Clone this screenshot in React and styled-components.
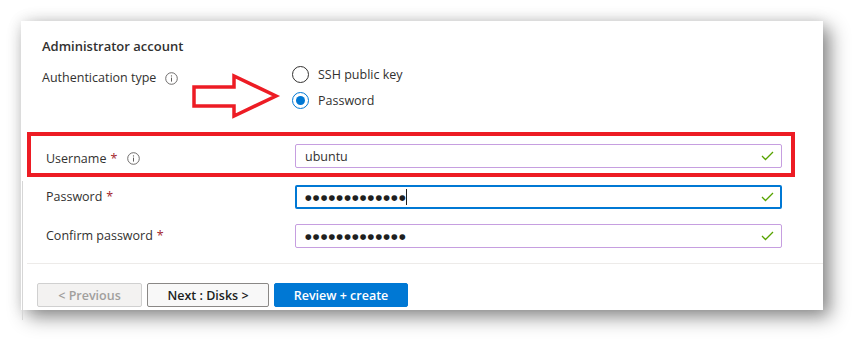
import React from "react";
import styled, { createGlobalStyle } from "styled-components";

const Global = createGlobalStyle`
  html, body { margin: 0; padding: 0; background: #ffffff; }
  body { font-family: "Open Sans", "Noto Sans", Arial, sans-serif; color: #323130; }
  * { box-sizing: border-box; }
`;

const Page = styled.div`
  width: 865px;
  height: 362px;
  padding: 21px 0 0 21px;
  overflow: hidden;
`;

const Card = styled.div`
  position: relative;
  width: 802px;
  height: 289px;
  background: #ffffff;
  box-shadow: 7px 7px 18px rgba(0, 0, 0, 0.45), 0 0 14px rgba(0, 0, 0, 0.1);
  display: flex;
  flex-direction: column;
`;

const Top = styled.div`
  position: relative;
  padding: 15px 0 0 21px;
`;

const Title = styled.div`
  font-size: 13px;
  font-weight: 600;
  line-height: 20px;
  color: #323130;
`;

const AuthRow = styled.div`
  display: grid;
  grid-template-columns: 250px 1fr;
  margin-top: 8px;
`;

const Label = styled.div`
  display: flex;
  align-items: center;
  font-size: 12.5px;
  line-height: 20px;
  color: #323130;
  padding-top: ${(p) => p.$pt || 0}px;
  align-self: ${(p) => p.$align || "center"};
`;

const Req = styled.span`
  color: #a4262c;
  margin-left: 4px;
`;

const InfoSvg = styled.svg`
  margin-left: ${(p) => p.$ml}px;
  flex: none;
`;

const RadioGroup = styled.div`
  display: flex;
  flex-direction: column;
  gap: 6px;
`;

const RadioRow = styled.div`
  display: flex;
  align-items: center;
  gap: 9px;
  height: 20px;
  font-size: 12.5px;
  color: #323130;
`;

const RadioCircle = styled.span`
  width: 17px;
  height: 17px;
  border-radius: 50%;
  border: 1px solid ${(p) => (p.$checked ? "#0078d4" : "#323130")};
  display: inline-flex;
  align-items: center;
  justify-content: center;
  &::after {
    content: "";
    width: 9px;
    height: 9px;
    border-radius: 50%;
    background: ${(p) => (p.$checked ? "#0078d4" : "transparent")};
  }
`;

const ArrowSvg = styled.svg`
  position: absolute;
  left: 169px;
  top: 52px;
`;

const Highlight = styled.div`
  margin: 22px 0 0 6px;
  width: 768px;
  height: 45px;
  border: 4px solid #ed1c24;
  display: grid;
  grid-template-columns: 249px 487px;
  padding: 8px 0 0 15px;
`;

const Lower = styled.div`
  position: relative;
  flex: 1;
  margin-left: 6px;
  padding: 8px 0 0 0;
  display: flex;
  flex-direction: column;
  &::before {
    content: "";
    position: absolute;
    left: -5px;
    top: 4px;
    bottom: -10px;
    width: 1px;
    background: #d6d6d6;
  }
`;

const FormRow = styled.div`
  display: grid;
  grid-template-columns: 249px 487px;
  padding-left: 19px;
  margin-bottom: ${(p) => p.$mb || 0}px;
`;

const Input = styled.div`
  position: relative;
  height: 24px;
  border: ${(p) => (p.$focused ? "2px solid #0078d4" : "1px solid #c69ee0")};
  border-radius: 2px;
  display: flex;
  align-items: center;
  padding-left: ${(p) => (p.$focused ? 8 : 9)}px;
  font-size: 12.5px;
  color: #323130;
`;

const Dots = styled.span`
  font-family: "DejaVu Sans", sans-serif;
  font-size: 7.6px;
  letter-spacing: 1.2px;
  color: #201f1e;
`;

const Caret = styled.span`
  display: inline-block;
  width: 1px;
  height: 16px;
  background: #201f1e;
  margin-left: -1px;
`;

const Check = styled.svg`
  position: absolute;
  right: ${(p) => (p.$focused ? 6 : 7)}px;
  top: 50%;
  transform: translateY(-50%);
`;

const Divider = styled.div`
  height: 1px;
  background: #edebe9;
  margin-top: 15px;
`;

const Footer = styled.div`
  display: flex;
  gap: 5px;
  padding: 19px 0 0 10px;
`;

const Button = styled.button`
  height: 24px;
  width: ${(p) => p.$w}px;
  font-family: "Open Sans", "Noto Sans", Arial, sans-serif;
  font-size: 12.5px;
  font-weight: 600;
  border-radius: 2px;
  padding: 0;
  cursor: pointer;
  ${(p) =>
    p.$variant === "disabled"
      ? `background:#f3f2f1;border:1px solid #d0d0d0;color:#a19f9d;`
      : p.$variant === "primary"
      ? `background:#0078d4;border:1px solid #0078d4;color:#ffffff;`
      : `background:#f8f8f8;border:1px solid #8a8886;color:#201f1e;`}
`;

const InfoIcon = ({ ml }) => (
  <InfoSvg $ml={ml} width="13" height="13" viewBox="0 0 13 13">
    <circle cx="6.5" cy="6.5" r="5.8" fill="none" stroke="#605e5c" strokeWidth="0.9" />
    <line x1="6.5" y1="5.6" x2="6.5" y2="9.6" stroke="#605e5c" strokeWidth="1" />
    <circle cx="6.5" cy="3.9" r="0.65" fill="#605e5c" />
  </InfoSvg>
);

const CheckIcon = ({ focused }) => (
  <Check $focused={focused} width="13" height="10" viewBox="0 0 13 10">
    <polyline points="1,5 4.5,8.5 12,1" fill="none" stroke="#57a300" strokeWidth="1.3" />
  </Check>
);

const Field = ({ label, required, info }) => (
  <Label>
    {label}
    {required && <Req>*</Req>}
    {info && <InfoIcon ml={10} />}
  </Label>
);

export default function App() {
  const dots = "●●●●●●●●●●●●●";
  return (
    <>
      <Global />
      <Page>
        <Card>
          <Top>
            <Title>Administrator account</Title>
            <AuthRow>
              <Label $pt={4} $align="start">
                Authentication type
                <InfoIcon ml={9} />
              </Label>
              <RadioGroup>
                <RadioRow>
                  <RadioCircle />
                  SSH public key
                </RadioRow>
                <RadioRow>
                  <RadioCircle $checked />
                  Password
                </RadioRow>
              </RadioGroup>
            </AuthRow>
            <ArrowSvg width="92" height="48" viewBox="0 0 92 48">
              <polygon
                points="4,14 44,14 44,3 86,23 44,43 44,33 4,33"
                fill="none"
                stroke="#ed1c24"
                strokeWidth="3.5"
                strokeLinejoin="miter"
              />
            </ArrowSvg>
          </Top>
          <Highlight>
            <Field label="Username" required info />
            <Input>
              ubuntu
              <CheckIcon />
            </Input>
          </Highlight>
          <Lower>
            <FormRow $mb={15}>
              <Field label="Password" required />
              <Input $focused>
                <Dots>{dots}</Dots>
                <Caret />
                <CheckIcon focused />
              </Input>
            </FormRow>
            <FormRow>
              <Field label="Confirm password" required />
              <Input>
                <Dots>{dots}</Dots>
                <CheckIcon />
              </Input>
            </FormRow>
            <Divider />
            <Footer>
              <Button $variant="disabled" $w={105}>&lt; Previous</Button>
              <Button $w={122}>Next : Disks &gt;</Button>
              <Button $variant="primary" $w={134}>Review + create</Button>
            </Footer>
          </Lower>
        </Card>
      </Page>
    </>
  );
}
